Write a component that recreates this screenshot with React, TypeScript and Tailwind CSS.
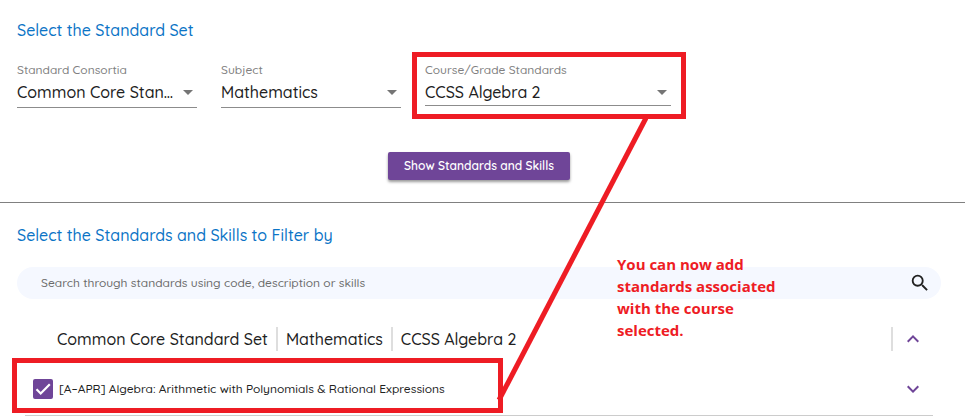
import { useState } from "react";

const selects = [
  {
    id: "consortia",
    label: "Standard Consortia",
    options: ["Common Core Standard Set"],
    width: "w-[180px]",
    height: "h-[30px]",
  },
  {
    id: "subject",
    label: "Subject",
    options: ["Mathematics"],
    width: "w-[180px]",
    height: "h-[30px]",
  },
  {
    id: "course",
    label: "Course/Grade Standards",
    options: ["CCSS Algebra 2"],
    width: "w-[246px]",
    height: "h-7",
  },
];

function SelectField({ id, label, options, width, height }: (typeof selects)[number]) {
  return (
    <div className={width}>
      <label htmlFor={id} className="block text-xs leading-4 text-[#808080]">
        {label}
      </label>
      <div className={`relative border-b border-[#8c8c8c] ${height}`}>
        <select
          id={id}
          className="block h-7 w-full appearance-none truncate bg-transparent pr-[22px] text-base font-medium text-[#212121] outline-none"
        >
          {options.map((option) => (
            <option key={option}>{option}</option>
          ))}
        </select>
        <svg viewBox="0 0 10 5" className="pointer-events-none absolute top-3 right-1 h-[5px] w-[10px]" fill="#757575">
          <path d="M0 0h10L5 5z" />
        </svg>
      </div>
    </div>
  );
}

function Chevron({ up = false }: { up?: boolean }) {
  return (
    <svg viewBox="0 0 24 24" className="size-6" fill="#6f4598">
      {up ? (
        <path d="M12 8l-6 6 1.41 1.41L12 10.83l4.59 4.58L18 14z" />
      ) : (
        <path d="M16.59 8.59L12 13.17 7.41 8.59 6 10l6 6 6-6z" />
      )}
    </svg>
  );
}

// Red call-outs drawn over the form
function Annotations() {
  return (
    <div className="pointer-events-none absolute inset-0">
      <svg className="absolute top-0 left-0 h-[416px] w-[700px]" fill="none" stroke="#ee1c24" strokeWidth="5">
        <rect x="414.5" y="54.5" width="269" height="62" />
        <rect x="14.5" y="360.5" width="486" height="50" />
        <path d="M646 118L499 400" />
      </svg>
      <p className="absolute top-[253px] left-[617px] w-44 font-['Open_Sans',sans-serif] text-[15px] leading-[22px] font-bold text-[#ee1c24]">
        You can now add standards associated with the course selected.
      </p>
    </div>
  );
}

export default function App() {
  const [checked, setChecked] = useState(true);
  const [query, setQuery] = useState("");

  return (
    <main className="relative overflow-hidden bg-white font-[Quicksand,Lato,sans-serif] font-medium text-[#212121]">
      <section className="border-b border-[#808080] pt-[18px] pr-6 pb-[22px] pl-[17px]">
        <h2 className="text-base leading-6 font-medium text-[#0b74c6]">Select the Standard Set</h2>
        <div className="mt-5 flex gap-6">
          {selects.map((field) => (
            <SelectField key={field.id} {...field} />
          ))}
        </div>
        <div className="mt-11 flex justify-center">
          <button
            type="button"
            className="h-7 rounded-xs bg-[#6f4598] px-4 text-xs font-semibold text-white shadow-[0_2px_3px_rgba(0,0,0,0.4)]"
          >
            Show Standards and Skills
          </button>
        </div>
      </section>

      <section className="pt-5 pr-6 pl-[17px]">
        <h2 className="text-base leading-6 font-medium text-[#0b74c6]">Select the Standards and Skills to Filter by</h2>
        <div className="mt-5 flex h-8 items-center rounded-full bg-[#f5f8ff] pr-[10px] pl-6">
          <input
            type="text"
            aria-label="Search standards"
            placeholder="Search through standards using code, description or skills"
            value={query}
            onChange={(e) => setQuery(e.target.value)}
            className="min-w-0 flex-1 bg-transparent text-xs outline-none placeholder:text-[#6b6b6b]"
          />
          <button type="button" aria-label="Search">
            <svg viewBox="0 0 24 24" className="size-[22px]" fill="#212121">
              <path d="M15.5 14h-.79l-.28-.27A6.47 6.47 0 0 0 16 9.5 6.5 6.5 0 1 0 9.5 16c1.61 0 3.09-.59 4.23-1.57l.27.28v.79l5 4.99L20.49 19l-4.99-5zm-6 0C7.01 14 5 11.99 5 9.5S7.01 5 9.5 5 14 7.01 14 9.5 11.99 14 9.5 14z" />
            </svg>
          </button>
        </div>

        <div className="mt-7 flex h-6 items-center pr-4 pl-10 text-base leading-6">
          <span className="border-r-2 border-[#dedede] pr-2">Common Core Standard Set</span>
          <span className="border-r-2 border-[#dedede] px-2">Mathematics</span>
          <span className="pl-2">CCSS Algebra 2</span>
          <div className="ml-auto flex border-l-2 border-[#dedede] pl-2">
            <button type="button" aria-label="Collapse standards">
              <Chevron up />
            </button>
          </div>
        </div>

        <div className="mt-3 mr-2 ml-2 flex h-[53px] items-center border-b border-[#cccccc] pr-2 pl-2">
          <label className="flex items-center gap-[6px] text-xs">
            <span className="relative size-5">
              <input
                type="checkbox"
                checked={checked}
                onChange={(e) => setChecked(e.target.checked)}
                className="block size-5 appearance-none rounded-xs border-2 border-[#6f4598] checked:bg-[#6f4598]"
              />
              {checked && (
                <svg
                  viewBox="0 0 20 20"
                  className="pointer-events-none absolute inset-0"
                  fill="none"
                  stroke="white"
                  strokeWidth="2.2"
                >
                  <path d="M3.5 10.2l4.2 4.3L16.8 5.3" />
                </svg>
              )}
            </span>
            [A–APR] Algebra: Arithmetic with Polynomials &amp; Rational Expressions
          </label>
          <button type="button" aria-label="Expand standard" className="ml-auto">
            <Chevron />
          </button>
        </div>
      </section>

      <Annotations />
    </main>
  );
}
